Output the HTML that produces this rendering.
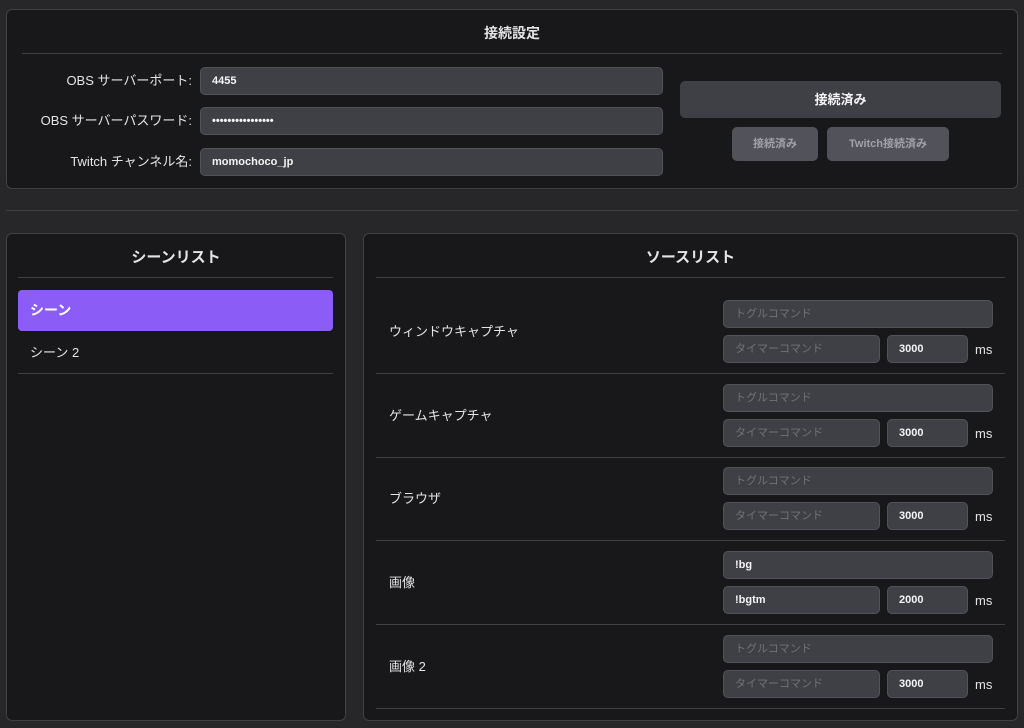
<!DOCTYPE html>
<html><head><meta charset="utf-8"><style>
*{box-sizing:border-box;margin:0;padding:0}
body{width:1024px;height:728px;background:#27272a;font-family:"Liberation Sans","Noto Sans CJK JP",sans-serif;color:#e4e4e7;position:relative;overflow:hidden;font-size:13px}
.abs{position:absolute}
.panel{position:absolute;background:#18181b;border:1px solid #3f3f46;border-radius:6px}
.hr{position:absolute;height:1px;background:#3f3f46}
.inp{position:absolute;background:#3f3f46;border:1px solid #52525b;border-radius:5px;height:28px;font-size:11px;font-weight:bold;color:#f4f4f5;padding-left:11px;line-height:26px}
.ph{color:#71717a;font-weight:normal}
.lbl{position:absolute;font-size:13px;color:#e4e4e7}
.title{position:absolute;font-weight:bold;text-align:center}
.btn{position:absolute;background:#3f3f46;border-radius:5px;text-align:center;font-weight:bold}
</style></head><body>
<div class="panel" style="left:6px;top:9px;width:1012px;height:180px"></div>
<div class="title" style="left:6px;width:1012px;top:23px;font-size:14px">接続設定</div>
<div class="hr" style="left:22px;top:53px;width:980px"></div>
<div class="lbl" style="right:832px;top:70px">OBS サーバーポート:</div>
<div class="lbl" style="right:832px;top:110px">OBS サーバーパスワード:</div>
<div class="lbl" style="right:832px;top:151px">Twitch チャンネル名:</div>
<div class="inp" style="left:200px;top:67px;width:463px">4455</div>
<div class="inp" style="left:200px;top:107px;width:463px">••••••••••••••••</div>
<div class="inp" style="left:200px;top:148px;width:463px">momochoco_jp</div>
<div class="btn" style="left:680px;top:81px;width:321px;height:37px;line-height:37px;font-size:13px;color:#f4f4f5">接続済み</div>
<div class="btn" style="left:732px;top:127px;width:86px;height:34px;line-height:34px;font-size:11px;color:#a1a1aa;background:#52525b">接続済み</div>
<div class="btn" style="left:827px;top:127px;width:122px;height:34px;line-height:34px;font-size:11px;color:#a1a1aa;background:#52525b">Twitch接続済み</div>
<div class="hr" style="left:6px;top:210px;width:1012px"></div>

<div class="panel" style="left:6px;top:233px;width:340px;height:488px"></div>
<div class="title" style="left:6px;width:340px;top:246px;font-size:15px">シーンリスト</div>
<div class="hr" style="left:18px;top:277px;width:315px"></div>
<div class="abs" style="left:18px;top:290px;width:315px;height:41px;background:#8b5cf6;border-radius:4px;font-weight:bold;color:#fff;padding-left:12px;line-height:41px;font-size:14px">シーン</div>
<div class="lbl" style="left:30px;top:342px">シーン 2</div>
<div class="hr" style="left:18px;top:373px;width:315px"></div>

<div class="panel" style="left:363px;top:233px;width:655px;height:488px"></div>
<div class="title" style="left:363px;width:655px;top:246px;font-size:15px">ソースリスト</div>
<div class="hr" style="left:376px;top:277px;width:629px"></div>

<div id="rows"></div>
<script>
var rows=[["ウィンドウキャプチャ","","","3000"],["ゲームキャプチャ","","","3000"],["ブラウザ","","","3000"],["画像","!bg","!bgtm","2000"],["画像 2","","","3000"]];
var h="";
rows.forEach(function(r,i){var y=290+i*83.7;
h+='<div class="lbl" style="left:389px;top:'+(y+31)+'px">'+r[0]+'</div>';
h+='<div class="inp" style="left:723px;top:'+(y+10)+'px;width:270px">'+(r[1]||'<span class="ph">トグルコマンド</span>')+'</div>';
h+='<div class="inp" style="left:723px;top:'+(y+45)+'px;width:157px">'+(r[2]||'<span class="ph">タイマーコマンド</span>')+'</div>';
h+='<div class="inp" style="left:887px;top:'+(y+45)+'px;width:81px">'+r[3]+'</div>';
h+='<div class="lbl" style="left:975px;top:'+(y+52)+'px">ms</div>';
h+='<div class="hr" style="left:376px;top:'+Math.round(y+83)+'px;width:629px"></div>';});
document.getElementById("rows").innerHTML=h;
</script>
</body></html>
